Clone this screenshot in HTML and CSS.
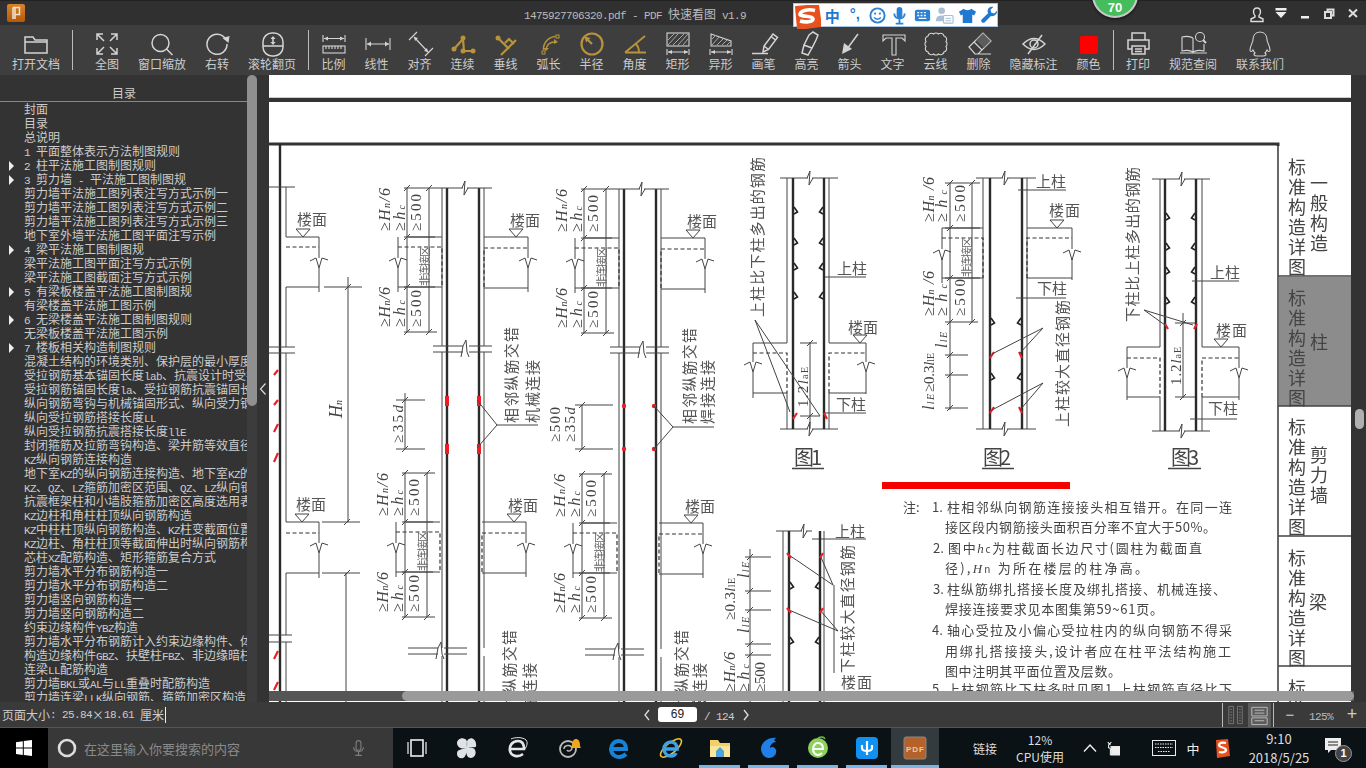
FILE: index.html
```html
<!DOCTYPE html>
<html lang="zh-CN">
<head>
<meta charset="utf-8">
<title>PDF 快速看图</title>
<link rel="stylesheet" href="styles.css">
</head>
<body>
<div class="app">
  <header class="titlebar">
    <svg class="logo" viewBox="0 0 18 18"><defs><linearGradient id="lg" x1="0" y1="0" x2="0" y2="1"><stop offset="0" stop-color="#d8832a"/><stop offset="1" stop-color="#b35a0c"/></linearGradient></defs><rect width="18" height="18" rx="2" fill="url(#lg)"/><path d="M6 3.5h6.500v7H8M6 3.500V15M8 3.500V15" class="logo-p"/></svg>
    <div class="title"><span class="lat">1475927706320.pdf - PDF </span>快速看图<span class="lat"> v1.9</span></div>
    <div class="winctl">
      <span class="wc"><svg viewBox="0 0 24 24" class="ic-w"><path d="M12 7c-2.500 0-3.500 1.700-3.500 4 0 1.500.6 2.800 1.500 3.500v1.500L6 18v2.500h12V18l-4-2v-1.500c.9-.7 1.500-2 1.500-3.500 0-2.300-1-4-3.500-4z"/></svg></span>
      <span class="wc"><svg viewBox="0 0 24 24" class="ic-f"><path d="M6.500 7h11v2.500h-11zM6.500 11h11L12 17z"/></svg></span>
      <span class="wc"><svg viewBox="0 0 24 24" class="ic-f"><path d="M8 15h8v2.500H8z"/></svg></span>
      <span class="wc"><svg viewBox="0 0 24 24" class="ic-w"><path d="M8 11h6v6H8zM10.500 11V8.500h6V14.500h-2.500" stroke-width="2"/></svg></span>
      <span class="wc"><svg viewBox="0 0 24 24" class="ic-w"><path d="M8 8.500l8 7.500M16 8.500l-8 7.500" stroke-width="2"/></svg></span>
    </div>
  </header>

  <div class="badge"><span class="badge-num">70</span></div>

  <div class="ime">
    <svg class="ime-s" viewBox="0 0 28 24"><path d="M3 2 L25 0 L28 21 L5 24 Z" fill="#e8501e" stroke="#e8501e" stroke-width="2" stroke-linejoin="round"/><path d="M22 5.500C16 4 8 5 7 9c-.5 3 13 1.500 13 5 0 3-8 3.500-13 2" fill="none" stroke="#fff" stroke-width="3.600"/></svg>
    <span class="ime-item ime-zh">中</span>
    <span class="ime-item ime-pun">°,</span>
    <span class="ime-item"><svg viewBox="0 0 20 20" class="ime-ic"><circle cx="10" cy="10" r="7.500" fill="none" stroke="#2a82d6" stroke-width="2"/><circle cx="7.500" cy="8" r="1.200" fill="#2a82d6"/><circle cx="12.500" cy="8" r="1.200" fill="#2a82d6"/><path d="M6.500 12c1.500 2.500 5.500 2.500 7 0" fill="none" stroke="#2a82d6" stroke-width="1.500"/></svg></span>
    <span class="ime-item"><svg viewBox="0 0 20 20" class="ime-ic"><rect x="7" y="1" width="6" height="12" rx="3" fill="#2a82d6"/><path d="M4.500 8c0 7 11 7 11 0M10 14v4M6 18.500h8" fill="none" stroke="#2a82d6" stroke-width="2"/></svg></span>
    <span class="ime-item"><svg viewBox="0 0 20 20" class="ime-ic"><rect x="2" y="4" width="16" height="12" rx="2" fill="#2a82d6"/><path d="M4.500 7h2M8 7h2M11.500 7h2M4.500 10h2M8 10h2M11.500 10h2M6 13h8" stroke="#fff" stroke-width="1.500"/></svg></span>
    <span class="ime-item"><svg viewBox="0 0 20 20" class="ime-ic"><circle cx="7" cy="5" r="3.500" fill="#a9bfd6"/><path d="M1 16c0-5 3-6 6-6s3 1 3 1v5z" fill="#a9bfd6"/><rect x="9" y="10" width="10" height="8" rx="1" fill="#fff" stroke="#a9bfd6" stroke-width="1.200"/><path d="M11 13h6M11 15.500h6" stroke="#a9bfd6"/></svg></span>
    <span class="ime-item"><svg viewBox="0 0 20 20" class="ime-ic"><path d="M6 3L1 6l2 4 2-1v9h10V9l2 1 2-4-5-3c-1 2-7 2-8 0z" fill="#1f78d1"/></svg></span>
    <span class="ime-item"><svg viewBox="0 0 20 20" class="ime-ic"><path d="M18 5l-3 3-3-1-1-3 3-3c-3-1-6 1-6 4 0 1 0 1.500.5 2.500L2 14c-1 1-1 2 0 3s2 1 3 0l6.500-6.500c3 1 7-2 6.500-5.500z" fill="#1f78d1"/></svg></span>
  </div>

  <nav class="toolbar">
    <div class="tool wide"><svg viewBox="0 0 36 30" class="ti"><path d="M7 24V8h8l2 3h12v13zM7 13h22"/></svg><span>打开文档</span></div>
    <i class="sep"></i>
    <div class="tool gap-l"><svg viewBox="0 0 36 30" class="ti"><path d="M8 11V5h6M8 5l7 7M28 11V5h-6M28 5l-7 7M8 19v6h6M8 25l7-7M28 19v6h-6M28 25l-7-7"/></svg><span>全图</span></div>
    <div class="tool wide"><svg viewBox="0 0 36 30" class="ti"><circle cx="16.500" cy="14" r="8.500"/><path d="M22.500 20l6 6"/></svg><span>窗口缩放</span></div>
    <div class="tool"><svg viewBox="0 0 36 30" class="ti"><path d="M26.500 10A10 10 0 1 0 28 15"/><path d="M23.500 9l7-2-1 7z" class="fill"/></svg><span>右转</span></div>
    <div class="tool wide"><svg viewBox="0 0 36 30" class="ti"><rect x="9" y="4" width="20" height="23" rx="9"/><path d="M9 17h20"/><path d="M19 8v7" /><path d="M16.500 10l2.500-3 2.500 3zM16.500 13l2.500 3 2.500-3z" class="fill"/></svg><span>滚轮翻页</span></div>
    <i class="sep"></i>
    <div class="tool"><svg viewBox="0 0 36 30" class="ti thin"><path d="M7 6v7M29 6v7M8 9.500h20"/><path d="M8 9.500l4-2v4zM28 9.500l-4-2v4z" class="fill"/><rect x="7" y="17" width="22" height="7"/><path d="M10 17v3M13 17v3M16 17v3M19 17v3M22 17v3M25 17v3"/></svg><span>比例</span></div>
    <div class="tool"><svg viewBox="0 0 36 30" class="ti thin"><path d="M7 9v12M31 9v12M8 15h22"/><path d="M8 15l4-2.500v5zM30 15l-4-2.500v5z" class="fill"/></svg><span>线性</span></div>
    <div class="tool"><svg viewBox="0 0 36 30" class="ti thin"><path d="M7 11l8-8M23 27l8-8M12 8l14 15"/><path d="M12 8l1 4 3-3zM26 23l-1-4-3 3z" class="fill"/></svg><span>对齐</span></div>
    <div class="tool"><svg viewBox="0 0 36 30" class="ti gold"><path d="M9 20l9-10M18 10l1 12h9"/><circle cx="9" cy="20" r="2.500" class="fillg"/><circle cx="18" cy="9" r="2.500" class="fillg"/><circle cx="18" cy="22" r="2.500" class="fillg"/><circle cx="28" cy="22" r="2.500" class="fillg"/></svg><span>连续</span></div>
    <div class="tool"><svg viewBox="0 0 36 30" class="ti gold"><circle cx="10" cy="9" r="2.500" class="fillg"/><path d="M28 11L13 26M10 9l11 11M17 14l4-4 5 5"/></svg><span>垂线</span></div>
    <div class="tool"><svg viewBox="0 0 36 30" class="ti gold"><rect x="11" y="22" width="3" height="3" class="tn"/><rect x="25" y="6" width="3" height="3" class="tn"/><path d="M12.500 21C12 13 18 8 24.500 7.500M15 21c.5-5 4-8 9-8" class="tl"/><path d="M23 10l4 3-4 2zM12 19l3 3 3-3z" class="fillg"/></svg><span>弧长</span></div>
    <div class="tool"><svg viewBox="0 0 36 30" class="ti gold"><circle cx="18" cy="15" r="10.500"/><path d="M18 15l-6-6"/><path d="M10.500 7.500l6 1.500-4.500 4.500z" class="fillg"/></svg><span>半径</span></div>
    <div class="tool"><svg viewBox="0 0 36 30" class="ti gold"><path d="M8 23.500h21M8 23.500L28 7M19 15c2 2 3 5 3 8" class="tm"/></svg><span>角度</span></div>
    <div class="tool"><svg viewBox="0 0 36 30" class="ti thin"><rect x="7" y="4" width="22" height="13"/><path d="M8 11l6-6M8 16l10-11M13 16l11-11M18 16l10-11M23 16l5-6" class="hatch"/><path d="M7 20v6M29 20v6M8 23h20"/><path d="M8 23l4-2v4zM28 23l-4-2v4z" class="fill"/></svg><span>矩形</span></div>
    <div class="tool"><svg viewBox="0 0 36 30" class="ti thin"><path d="M8 5l20 7v5H8z"/><path d="M9 10l4-4M9 16l7-8M14 16l6-6M19 16l5-5M24 16l3-3" class="hatch"/><path d="M7 20v6M29 20v6M8 23h20"/><path d="M8 23l4-2v4zM28 23l-4-2v4z" class="fill"/></svg><span>异形</span></div>
    <div class="tool"><svg viewBox="0 0 36 30" class="ti"><path d="M17 23l1-6 9-12 4.500 3.500-9 12zM18 17l4.500 3.500M25 7.500L29.500 11M6 24.500h16"/></svg><span>画笔</span></div>
    <div class="tool"><svg viewBox="0 0 36 30" class="ti"><path d="M20 6l4-3 5 3-2 5-4 8-8-3zM15 16l-2 8 6 2 4-7"/></svg><span>高亮</span></div>
    <div class="tool"><svg viewBox="0 0 36 30" class="ti"><path d="M26 5L15 20"/><path d="M10 25l2-11 8 6z" class="fill"/></svg><span>箭头</span></div>
    <div class="tool"><svg viewBox="0 0 36 30" class="ti thin"><path d="M8 6h22v6l-3-3h-6v17h-4V9h-6l-3 3z"/></svg><span>文字</span></div>
    <div class="tool"><svg viewBox="0 0 36 30" class="ti thin"><path d="M10 7A3.500 3.500 0 0 1 15.500 5 3.500 3.500 0 0 1 20.500 5 3.500 3.500 0 0 1 26 7 3.500 3.500 0 0 1 28 12.500 3.500 3.500 0 0 1 28 17.500 3.500 3.500 0 0 1 26 23 3.500 3.500 0 0 1 20.500 25 3.500 3.500 0 0 1 15.500 25 3.500 3.500 0 0 1 10 23 3.500 3.500 0 0 1 8 17.500 3.500 3.500 0 0 1 8 12.500 3.500 3.500 0 0 1 10 7Z"/></svg><span>云线</span></div>
    <div class="tool"><svg viewBox="0 0 36 30" class="ti thinner"><path d="M8 18L22 4l8 8-13 13h-3zM13 13l8 8M15 25h15"/><path d="M15 11l7-7 8 8-7 7z" class="fill-d"/></svg><span>删除</span></div>
    <div class="tool wide"><svg viewBox="0 0 36 30" class="ti"><path d="M7 15Q18 4 29 15 18 26 7 15z"/><circle cx="18" cy="15" r="4"/><path d="M12 25L26 6"/></svg><span>隐藏标注</span></div>
    <div class="tool"><svg viewBox="0 0 36 30" class="ti"><rect x="9" y="7" width="18" height="18" rx="2" class="red"/></svg><span>颜色</span></div>
    <i class="sep"></i>
    <div class="tool"><svg viewBox="0 0 36 30" class="ti"><path d="M12 11V4h13v7M12 20H8v-9h21v9h-4M12 17h13v8H12zM15 20h7M15 22.500h7"/></svg><span>打印</span></div>
    <div class="tool wide"><svg viewBox="0 0 36 30" class="ti thin"><path d="M18 9c-3-2-7-2-11-1v14c4-1 8-1 11 1 3-2 7-2 11-1v-7M18 9v14M5 24h27"/><circle cx="25" cy="8" r="4.500"/><path d="M28 11l3 3" stroke-width="2"/></svg><span>规范查阅</span></div>
    <div class="tool wide"><svg viewBox="0 0 36 30" class="ti thin"><path d="M18 3c-5 0-7 4-7 8 0 2-3 6-3 10 0 2 2 2 3 0 1 2 2 3 2 3-2 1-1 3 2 3h6c3 0 4-2 2-3 0 0 1-1 2-3 1 2 3 2 3 0 0-4-3-8-3-10 0-4-2-8-7-8z"/></svg><span>联系我们</span></div>
  </nav>

  <main class="main">
    <aside class="toc">
      <div class="toc-body">
        <div class="toc-head">目录</div>
        <div class="toc-list">
          <div class="row">封面</div>
          <div class="row">目录</div>
          <div class="row">总说明</div>
          <div class="row"><span class="lat">1 </span>平面整体表示方法制图规则</div>
          <div class="row arrow"><span class="lat">2 </span>柱平法施工图制图规则</div>
          <div class="row arrow"><span class="lat">3 </span>剪力墙<span class="lat"> - </span>平法施工图制图规</div>
          <div class="row">剪力墙平法施工图列表注写方式示例一</div>
          <div class="row">剪力墙平法施工图列表注写方式示例二</div>
          <div class="row">剪力墙平法施工图列表注写方式示例三</div>
          <div class="row">地下室外墙平法施工图平面注写示例</div>
          <div class="row arrow"><span class="lat">4 </span>梁平法施工图制图规</div>
          <div class="row">梁平法施工图平面注写方式示例</div>
          <div class="row">梁平法施工图截面注写方式示例</div>
          <div class="row arrow"><span class="lat">5 </span>有梁板楼盖平法施工图制图规</div>
          <div class="row">有梁楼盖平法施工图示例</div>
          <div class="row arrow"><span class="lat">6 </span>无梁楼盖平法施工图制图规则</div>
          <div class="row">无梁板楼盖平法施工图示例</div>
          <div class="row arrow"><span class="lat">7 </span>楼板相关构造制图规则</div>
          <div class="row">混凝土结构的环境类别、保护层的最小厚度</div>
          <div class="row">受拉钢筋基本锚固长度<span class="lat">lab</span>、抗震设计时受拉钢筋</div>
          <div class="row">受拉钢筋锚固长度<span class="lat">la</span>、受拉钢筋抗震锚固长度</div>
          <div class="row">纵向钢筋弯钩与机械锚固形式、纵向受力钢筋</div>
          <div class="row">纵向受拉钢筋搭接长度<span class="lat">LL</span></div>
          <div class="row">纵向受拉钢筋抗震搭接长度<span class="lat">llE</span></div>
          <div class="row">封闭箍筋及拉筋弯钩构造、梁并筋等效直径</div>
          <div class="row"><span class="lat">KZ</span>纵向钢筋连接构造</div>
          <div class="row">地下室<span class="lat">KZ</span>的纵向钢筋连接构造、地下室<span class="lat">KZ</span>的</div>
          <div class="row"><span class="lat">KZ</span>、<span class="lat">QZ</span>、<span class="lat">LZ</span>箍筋加密区范围、<span class="lat">QZ</span>、<span class="lat">LZ</span>纵向钢筋</div>
          <div class="row">抗震框架柱和小墙肢箍筋加密区高度选用表</div>
          <div class="row"><span class="lat">KZ</span>边柱和角柱柱顶纵向钢筋构造</div>
          <div class="row"><span class="lat">KZ</span>中柱柱顶纵向钢筋构造、<span class="lat">KZ</span>柱变截面位置</div>
          <div class="row"><span class="lat">KZ</span>边柱、角柱柱顶等截面伸出时纵向钢筋构造</div>
          <div class="row">芯柱<span class="lat">XZ</span>配筋构造、矩形箍筋复合方式</div>
          <div class="row">剪力墙水平分布钢筋构造一</div>
          <div class="row">剪力墙水平分布钢筋构造二</div>
          <div class="row">剪力墙竖向钢筋构造一</div>
          <div class="row">剪力墙竖向钢筋构造二</div>
          <div class="row">约束边缘构件<span class="lat">YBZ</span>构造</div>
          <div class="row">剪力墙水平分布钢筋计入约束边缘构件、体</div>
          <div class="row">构造边缘构件<span class="lat">GBZ</span>、扶壁柱<span class="lat">FBZ</span>、非边缘暗柱</div>
          <div class="row">连梁<span class="lat">LL</span>配筋构造</div>
          <div class="row">剪力墙<span class="lat">BKL</span>或<span class="lat">AL</span>与<span class="lat">LL</span>重叠时配筋构造</div>
          <div class="row">剪力墙连梁<span class="lat">LLK</span>纵向钢筋、箍筋加密区构造</div>
        </div>
      </div>
      <div class="toc-scroll"><div class="toc-thumb"></div></div>
    </aside>
    <div class="splitter"><svg viewBox="0 0 8 12" class="chev"><path d="M6.500 .5L1.500 6l5 5.500"/></svg></div>

    <section class="viewer">
      <svg class="page" viewBox="269 75 1082 627" preserveAspectRatio="none">
        <defs>
          <path id="zz" d="M-9 3L-3 0 0 10 3 0 9 2" class="th"/>
          <path id="zh" d="M-3 0L0-7-1 7 3 0" class="th"/>
          <path id="tick" d="M-3 3L3-3" class="th"/>
          <path id="kl" d="M0-5L3.500 0 0 2" class="kink"/>
          <path id="kr" d="M0-5L-3.500 0 0 2" class="kink"/>
          <g id="tri"><path d="M-7-8H7L0 0Z" class="th nofill"/></g>
          <g id="jt">
            <path d="M408 237H442M484 237H528M398 287H442M484 288H528M398 237V258M398 268V292M528 237V258M528 268V292" class="th"/>
            <path d="M398 247H442V287M484 287V248H528" class="dash"/>
            <use href="#zz" x="398" y="258"/><use href="#zz" x="528" y="258"/>
            <use href="#tri" x="516" y="237"/>
            <text x="510" y="226" class="cn" textLength="30">楼面</text>
            <path d="M407 188V332M429 188V332M404 188H437M404 237H435M404 287H435M404 332H437" class="th"/>
            <use href="#tick" x="407" y="188"/><use href="#tick" x="429" y="188"/><use href="#tick" x="407" y="237"/><use href="#tick" x="407" y="287"/><use href="#tick" x="407" y="332"/><use href="#tick" x="429" y="332"/>
            <text class="it" transform="translate(390,231) rotate(-90)" textLength="43">≥H<tspan class="sub">n</tspan>/6</text>
            <text class="it" transform="translate(405,231) rotate(-90)" textLength="26">≥h<tspan class="sub">c</tspan></text>
            <text class="sr" transform="translate(421,231) rotate(-90)" textLength="37">≥500</text>
            <text class="it" transform="translate(390,327) rotate(-90)" textLength="40">≥H<tspan class="sub">n</tspan>/6</text>
            <text class="it" transform="translate(405,327) rotate(-90)" textLength="27">≥h<tspan class="sub">c</tspan></text>
            <text class="sr" transform="translate(421,327) rotate(-90)" textLength="37">≥500</text>
            <text class="cn-s" transform="translate(429,286) rotate(-90)" textLength="40">非连接区</text>
          </g>
          <g id="leaf1">
            <path d="M433 346H463M469 346H492M433 352H463M469 352H492M461 357L463 346 466 340 467 352 469 357" class="th"/>
          </g>
        </defs>

        <rect x="269" y="75" width="1082" height="22" fill="#fff"/>
        <rect x="269" y="97" width="1082" height="1" fill="#ccc"/>
        <rect x="269" y="102" width="1082" height="600" fill="#fff"/>
        <rect x="1279" y="277" width="72" height="129" fill="#8c8c8c"/>

        <path d="M269 144H1278L1278 146" class="top"/>
        <path d="M1278 146V702M1278 276H1351M1278 406H1351M1278 536H1351M1278 666H1351" class="frame"/>

        <text x="1297" y="158" class="vt">标准构造详图</text>
        <text x="1297" y="289" class="vt">标准构造详图</text>
        <text x="1297" y="418" class="vt">标准构造详图</text>
        <text x="1297" y="549" class="vt">标准构造详图</text>
        <text x="1297" y="679" class="vt">标准构造详图</text>
        <text x="1319" y="174" class="vt">一般构造</text>
        <text x="1319" y="333" class="vt">柱</text>
        <text x="1319" y="446" class="vt">剪力墙</text>
        <text x="1318" y="593" class="vt">梁</text>

        <!-- left partial column -->
        <path d="M280 144V702" class="tk"/>
        <path d="M286 187V237M286 287V347M286 353V522M286 573V635M286 642V702M269 187H295M269 347H295M269 353H295M269 635H292M269 642H292" class="th"/>
        <path d="M286 237H319M286 287H319M286 522H319M286 573H319M319 237V258M319 268V292M319 522V543M319 553V578" class="th"/>
        <path d="M286 247H319M286 533H319" class="dash"/>
        <use href="#zz" x="319" y="258"/><use href="#zz" x="319" y="543"/>
        <use href="#tri" x="303" y="237"/><use href="#tri" x="302" y="522"/>
        <text x="297" y="225" class="cn" textLength="30">楼面</text>
        <text x="296" y="510" class="cn" textLength="30">楼面</text>
        <path d="M274 375L278 370M274 405L278 400M274 432L278 424M274 462L278 453M274 659L278 651M274 690L278 682" class="redl"/>

        <!-- Hn dimension -->
        <path d="M348 277V522M346 573V702M324 287H362M322 522H360M322 573H360" class="th"/>
        <use href="#tick" x="348" y="287"/><use href="#tick" x="347" y="522"/><use href="#tick" x="347" y="573"/>
        <text class="it big" transform="translate(342,418) rotate(-90)">H<tspan class="sub">n</tspan></text>

        <!-- column groups -->
        <path d="M442 188V346M442 352V648M442 656V702M484 188V346M484 352V648M484 656V702M619 189V347M619 353V649M619 657V702M661 189V347M661 353V649M661 657V702" class="th"/>
        <path d="M447 188V702M479 188V702M624 189V702M656 189V702" class="tk"/>
        <path d="M437 188H463M467 188H492M614 189H640M644 189H669" class="th"/>
        <use href="#zh" x="465" y="188"/><use href="#zh" x="642" y="189"/>
        <use href="#jt"/>
        <use href="#jt" x="177" y="1"/>
        <use href="#jt" x="-2" y="285"/>
        <use href="#jt" x="175" y="286"/>
        <use href="#leaf1"/>
        <use href="#leaf1" x="177" y="1"/>
        <use href="#leaf1" x="-25" y="302"/>
        <use href="#leaf1" x="152" y="303"/>

        <!-- mechanical joint -->
        <rect x="445" y="396" width="4" height="10" class="red"/><rect x="477" y="396" width="4" height="10" class="red"/>
        <rect x="445" y="444" width="4" height="10" class="red"/><rect x="477" y="444" width="4" height="10" class="red"/>
        <path d="M477 400L497 425 477 448M497 425H538M405 393V449M396 400H425M396 449H425" class="th"/>
        <use href="#tick" x="405" y="400"/><use href="#tick" x="405" y="449"/>
        <text class="sr" transform="translate(403,443) rotate(-90)" textLength="38">≥35<tspan class="ital">d</tspan></text>
        <text class="cn" transform="translate(517,423) rotate(-90)" textLength="96">相邻纵筋交错</text>
        <text class="cn" transform="translate(538,423) rotate(-90)" textLength="63">机械连接</text>

        <!-- welded joint -->
        <circle cx="624" cy="406" r="2.200" class="red"/><circle cx="654" cy="406" r="2.200" class="red"/>
        <circle cx="624" cy="449" r="2.200" class="red"/><circle cx="654" cy="449" r="2.200" class="red"/>
        <path d="M654 406L673 427 654 449M673 427H714M582 405V449M575 405H613M575 449H613" class="th"/>
        <use href="#tick" x="582" y="405"/><use href="#tick" x="582" y="449"/>
        <text class="sr" transform="translate(560,442) rotate(-90)" textLength="35">≥500</text>
        <text class="sr" transform="translate(575,442) rotate(-90)" textLength="35">≥35<tspan class="ital">d</tspan></text>
        <text class="cn" transform="translate(695,424) rotate(-90)" textLength="96">相邻纵筋交错</text>
        <text class="cn" transform="translate(713,424) rotate(-90)" textLength="64">焊接连接</text>

        <!-- lower labels, cut by the page fold -->
        <text class="cn" transform="translate(515,726) rotate(-90)" textLength="96">相邻纵筋交错</text>
        <text class="cn" transform="translate(535,727) rotate(-90)" textLength="64">机械连接</text>
        <text class="cn" transform="translate(687,726) rotate(-90)" textLength="96">相邻纵筋交错</text>
        <text class="cn" transform="translate(705,727) rotate(-90)" textLength="64">焊接连接</text>

        <!-- figure 1 -->
        <path d="M787 178V343M787 393V429M829 178V343M829 393V429M780 178H808M812 178H838M780 429H808M812 429H838" class="th"/>
        <path d="M793 178V429M824 178V429" class="tk"/>
        <use href="#zh" x="810" y="178"/><use href="#zh" x="810" y="429"/>
        <path d="M753 343H787M829 343H866M753 393H787M829 393H866M753 343V362M753 372V398M866 343V362M866 372V394" class="th"/>
        <path d="M753 353H787V393M829 393V353H866" class="dash"/>
        <use href="#zz" x="753" y="362"/><use href="#zz" x="866" y="362"/>
        <use href="#kl" x="794" y="212"/><use href="#kl" x="794" y="243"/><use href="#kl" x="794" y="268"/><use href="#kl" x="794" y="297"/>
        <use href="#kr" x="823" y="212"/><use href="#kr" x="823" y="243"/><use href="#kr" x="823" y="268"/><use href="#kr" x="823" y="297"/>
        <path d="M793 419L797 413M824 413L827 419" class="redl"/>
        <path d="M755 320L790 412M755 320L820 416M825 277H866M825 413H866M810 342V429M800 343H817M800 416H820" class="th"/>
        <use href="#tick" x="810" y="343"/><use href="#tick" x="810" y="416"/>
        <use href="#tri" x="860" y="343"/>
        <text class="cn" transform="translate(763,317) rotate(-90)" textLength="160">上柱比下柱多出的钢筋</text>
        <text x="837" y="274" class="cn" textLength="30">上柱</text>
        <text x="848" y="333" class="cn" textLength="30">楼面</text>
        <text x="836" y="410" class="cn" textLength="30">下柱</text>
        <text class="sr" transform="translate(808,407) rotate(-90)" textLength="40">1.2<tspan class="ital">l</tspan><tspan class="sub">aE</tspan></text>
        <text x="794" y="465" class="fig" textLength="28">图1</text>
        <path d="M792 468.500H824" class="fign"/>

        <!-- figure 2 -->
        <path d="M983 178V429M1027 178V429M976 178H1003M1007 178H1036M976 429H1003M1007 429H1036" class="th"/>
        <path d="M990 178V429M1022 178V429" class="tk"/>
        <use href="#zh" x="1005" y="178"/><use href="#zh" x="1005" y="429"/>
        <path d="M942 228H983M1027 228H1072M942 278H983M1027 278H1072M942 228V249M942 259V283M1072 228V249M1072 259V280" class="th"/>
        <path d="M942 238H983V278M1027 278V238H1072" class="dash"/>
        <use href="#zz" x="942" y="250"/><use href="#zz" x="1072" y="250"/>
        <use href="#kl" x="991" y="323"/><use href="#kl" x="991" y="378"/><use href="#kr" x="1021" y="323"/><use href="#kr" x="1021" y="378"/>
        <path d="M990 358L994 352M1019 352L1022 358M990 413L994 407M1019 407L1022 413" class="redl"/>
        <path d="M1043 328L992 354M1043 328L1020 353M1043 383L992 410M1043 383L1020 410M1018 190H1066M1016 298H1066M950 183V410M972 183V322M945 183H980M945 228H980M945 278H980M945 322H978M945 355H968M945 375H968M945 408H968" class="th"/>
        <use href="#tick" x="950" y="183"/><use href="#tick" x="972" y="183"/><use href="#tick" x="950" y="228"/><use href="#tick" x="950" y="278"/><use href="#tick" x="950" y="322"/><use href="#tick" x="972" y="322"/><use href="#tick" x="950" y="355"/><use href="#tick" x="950" y="375"/><use href="#tick" x="950" y="408"/>
        <use href="#tri" x="1057" y="228"/>
        <text class="it" transform="translate(934,222) rotate(-90)" textLength="45">≥H<tspan class="sub">n</tspan> /6</text>
        <text class="it" transform="translate(947,222) rotate(-90)" textLength="32">≥h<tspan class="sub">c</tspan></text>
        <text class="sr" transform="translate(965,222) rotate(-90)" textLength="37">≥500</text>
        <text class="it" transform="translate(934,316) rotate(-90)" textLength="45">≥H<tspan class="sub">n</tspan> /6</text>
        <text class="it" transform="translate(947,316) rotate(-90)" textLength="32">≥h<tspan class="sub">c</tspan></text>
        <text class="sr" transform="translate(965,316) rotate(-90)" textLength="37">≥500</text>
        <text class="cn-s" transform="translate(971,277) rotate(-90)" textLength="40">非连接区</text>
        <text class="sr" transform="translate(934,392) rotate(-90)" textLength="39">≥0.3<tspan class="ital">l</tspan><tspan class="sub">lE</tspan></text>
        <text class="it" transform="translate(947,348) rotate(-90)" textLength="16">l<tspan class="sub">lE</tspan></text>
        <text class="it" transform="translate(934,410) rotate(-90)" textLength="16">l<tspan class="sub">lE</tspan></text>
        <text class="cn" transform="translate(1068,427) rotate(-90)" textLength="127">上柱较大直径钢筋</text>
        <text x="1036" y="187" class="cn" textLength="30">上柱</text>
        <text x="1049" y="216" class="cn" textLength="31">楼面</text>
        <text x="1037" y="294" class="cn" textLength="30">下柱</text>
        <text x="983" y="465" class="fig" textLength="28">图2</text>
        <path d="M982 468.500H1014" class="fign"/>

        <!-- figure 3 -->
        <path d="M1160 179V347M1160 397V431M1202 179V347M1202 397V431M1152 179H1180M1184 179H1210M1152 431H1180M1184 431H1210" class="th"/>
        <path d="M1165 179V431M1196 179V431" class="tk"/>
        <use href="#zh" x="1182" y="179"/><use href="#zh" x="1182" y="431"/>
        <path d="M1127 347H1160M1202 347H1239M1127 397H1160M1202 397H1239M1127 347V368M1127 378V400M1239 347V368M1239 378V400" class="th"/>
        <path d="M1127 358H1160V397M1202 397V358H1239" class="dash"/>
        <use href="#zz" x="1127" y="368"/><use href="#zz" x="1239" y="368"/>
        <use href="#kl" x="1166" y="218"/><use href="#kl" x="1166" y="248"/><use href="#kl" x="1166" y="272"/><use href="#kl" x="1166" y="302"/>
        <use href="#kr" x="1195" y="218"/><use href="#kr" x="1195" y="248"/><use href="#kr" x="1195" y="272"/><use href="#kr" x="1195" y="302"/>
        <path d="M1165 324L1168 329M1194 329L1197 324" class="redl"/>
        <path d="M1144 310L1165 325M1144 310L1193 325M1192 281H1239M1190 419H1237M1183 313V398M1175 323H1195M1175 397H1195" class="th"/>
        <use href="#tick" x="1183" y="323"/><use href="#tick" x="1183" y="397"/>
        <use href="#tri" x="1221" y="347"/>
        <text class="cn" transform="translate(1138,322) rotate(-90)" textLength="155">下柱比上柱多出的钢筋</text>
        <text class="sr" transform="translate(1181,385) rotate(-90)" textLength="38">1.2<tspan class="ital">l</tspan><tspan class="sub">aE</tspan></text>
        <text x="1210" y="278" class="cn" textLength="30">上柱</text>
        <text x="1216" y="336" class="cn" textLength="31">楼面</text>
        <text x="1208" y="414" class="cn" textLength="30">下柱</text>
        <text x="1171" y="465" class="fig" textLength="28">图3</text>
        <path d="M1168 468.500H1201" class="fign"/>

        <rect x="882" y="482" width="188" height="7" fill="#f60000"/>

        <!-- lower figure -->
        <path d="M783 531V702M824 531V702M776 531H802M806 531H812M812 539H866" class="th"/>
        <use href="#zh" x="804" y="531"/>
        <path d="M789 531V702M820 531V702" class="tk"/>
        <text x="835" y="537" class="cn" textLength="30">上柱</text>
        <path d="M789 555L833 585M820 555L833 585M789 610L838 631M820 610L838 631M750 549V702M745 557H771M745 591H771M745 610H771M745 644H771M745 655H771M834 585V673" class="th"/>
        <use href="#tick" x="750" y="557"/><use href="#tick" x="750" y="591"/><use href="#tick" x="750" y="610"/><use href="#tick" x="750" y="644"/><use href="#tick" x="750" y="655"/>
        <use href="#kl" x="790" y="587"/><use href="#kl" x="790" y="642"/><use href="#kr" x="819" y="587"/><use href="#kr" x="819" y="642"/>
        <path d="M787 553L791 558M820 558L823 553M787 608L791 613M820 613L823 608" class="redl"/>
        <text class="it" transform="translate(749,578) rotate(-90)" textLength="16">l<tspan class="sub">lE</tspan></text>
        <text class="sr" transform="translate(735,620) rotate(-90)" textLength="42">≥0.3<tspan class="ital">l</tspan><tspan class="sub">lE</tspan></text>
        <text class="it" transform="translate(749,633) rotate(-90)" textLength="16">l<tspan class="sub">lE</tspan></text>
        <text class="it" transform="translate(735,692) rotate(-90)" textLength="40">≥H<tspan class="sub">n</tspan>/6</text>
        <text class="it" transform="translate(749,692) rotate(-90)" textLength="28">≥h<tspan class="sub">c</tspan></text>
        <text class="sr" transform="translate(765,692) rotate(-90)" textLength="30">≥500</text>
        <text class="cn" transform="translate(853,673) rotate(-90)" textLength="128">下柱较大直径钢筋</text>
        <text x="841" y="688" class="cn" textLength="31">楼面</text>

        <!-- notes -->
        <g class="notes">
          <text x="903" y="512">注:</text>
          <text x="932" y="512">1.</text>
          <text x="947" y="512" textLength="285">柱相邻纵向钢筋连接接头相互错开。在同一连</text>
          <text x="945" y="532" textLength="271">接区段内钢筋接头面积百分率不宜大于50%。</text>
          <text x="933" y="553">2.</text>
          <text x="948" y="553" textLength="254">图中<tspan class="ital">h</tspan><tspan class="sub">c</tspan>为柱截面长边尺寸(圆柱为截面直</text>
          <text x="945" y="573" textLength="203">径),<tspan class="ital">H</tspan><tspan class="sub">n</tspan> 为所在楼层的柱净高。</text>
          <text x="933" y="594">3.</text>
          <text x="947" y="594" textLength="279">柱纵筋绑扎搭接长度及绑扎搭接、机械连接、</text>
          <text x="945" y="614" textLength="218">焊接连接要求见本图集第59~61页。</text>
          <text x="932" y="635">4.</text>
          <text x="947" y="635" textLength="285">轴心受拉及小偏心受拉柱内的纵向钢筋不得采</text>
          <text x="945" y="656" textLength="286">用绑扎搭接接头,设计者应在柱平法结构施工</text>
          <text x="945" y="676" textLength="176">图中注明其平面位置及层数。</text>
          <text x="932" y="694">5.</text>
          <text x="947" y="694" textLength="285">上柱钢筋比下柱多时见图1,上柱钢筋直径比下</text>
        </g>
      </svg>
      <div class="hbar"><div class="hthumb"></div></div>
      <div class="vthumb"></div>
    </section>
  </main>

  <footer class="status">
    <div class="st-left">页面大小<span class="lat">: 25.84</span>×<span class="lat">18.61 </span>厘米<i class="caret"></i></div>
    <div class="pager">
      <svg viewBox="0 0 8 12" class="pg-arrow"><path d="M6 1L2 6l4 5"/></svg>
      <span class="pg-box">69</span>
      <span class="pg-total"><span class="lat">/ 124</span></span>
      <svg viewBox="0 0 8 12" class="pg-arrow"><path d="M2 1l4 5-4 5"/></svg>
    </div>
    <div class="st-right">
      <div class="views">
        <span class="view"><svg viewBox="0 0 24 24" class="vw"><path d="M4 3h5v18H4zM13 3h5v18h-5zM5.500 6h2M5.500 9h2M5.500 12h2M5.500 15h2M5.500 18h2M14.500 6h2M14.500 9h2M14.500 12h2M14.500 15h2M14.500 18h2"/></svg></span>
        <span class="view on"><svg viewBox="0 0 24 24" class="vw on"><path d="M4 4h16v9H4zM4 15h16v7H4zM7 7h10M7 10h10M7 18h10"/></svg></span>
      </div>
      <span class="zoom-btn">−</span>
      <span class="zoom-val"><span class="lat">125%</span></span>
      <span class="zoom-btn plus">+</span>
    </div>
  </footer>

  <div class="taskbar">
    <div class="start"><svg viewBox="0 0 16 16" class="win"><path d="M0 2.200L6.800 1.200V7.600H0zM7.800 1L16 0V7.600H7.800zM0 8.600H6.800V15L0 14zM7.800 8.600H16V16L7.800 15z"/></svg></div>
    <div class="search">
      <svg viewBox="0 0 20 20" class="cortana"><circle cx="10" cy="10" r="8" /></svg>
      <span class="search-text">在这里输入你要搜索的内容</span>
      <svg viewBox="0 0 16 20" class="mic"><rect x="5" y="1" width="6" height="12" rx="3"/><path d="M2 9c0 7 12 7 12 0M8 15v4M4 19h8"/></svg>
    </div>
    <div class="apps">
      <span class="app-i first"><svg viewBox="0 0 24 24" class="ai"><rect x="6" y="4" width="12" height="16" fill="none" stroke="#eee" stroke-width="1.600"/><path d="M3 6v12M21 6v12" stroke="#eee" stroke-width="1.200"/></svg></span>
      <span class="app-i"><svg viewBox="0 0 24 24" class="ai"><path d="M12 12C5 14 2 10 2 7s4-6 8-4c3 1 2 6 2 9zM12 12c-2 7 1 10 4 10s6-4 4-8c-1-3-6-2-8-2zM12 12c7-2 10 1 9-4 0-4-4-7-7-5-3 1-2 6-2 9zM12 12c-7 2-10 1-10 6 0 3 3 5 6 4 3-1 4-7 4-10z" fill="#dfe3e5"/></svg></span>
      <span class="app-i"><svg viewBox="0 0 24 24" class="ai"><path d="M4 13h14c0-6-2-8-6-8-6 0-9 5-8 10 1 5 8 7 13 3" fill="none" stroke="#e6e6e6" stroke-width="2.600"/><path d="M5 3c4-2 12-2 15 1s-1 9-1 9" fill="none" stroke="#e6e6e6" stroke-width="1"/></svg></span>
      <span class="app-i"><svg viewBox="0 0 24 24" class="ai"><circle cx="11" cy="13" r="8" fill="none" stroke="#bbb" stroke-width="1.800"/><path d="M7 13c0-4 7-5 8-1 0 3-4 4-5 2" fill="none" stroke="#bbb" stroke-width="1.500"/><path d="M15 9c0-4 2-6 4-6s4 2 4 6c0 2 1 3 1 3H14s1-1 1-3z" fill="#f0a818"/></svg></span>
      <span class="app-i"><svg viewBox="0 0 24 24" class="ai"><path d="M4 13h14c0-5-3-8-7-8-5 0-8 4-8 8 0 5 4 8 8 8 3 0 5-1 7-3" fill="none" stroke="#1783d8" stroke-width="4"/></svg></span>
      <span class="app-i"><svg viewBox="0 0 24 24" class="ai"><ellipse cx="12" cy="12" rx="13" ry="5" fill="none" stroke="#f0c030" stroke-width="1.600" transform="rotate(-40 12 12)"/><path d="M6 13h12c0-4-2-7-6-7-4 0-7 3-7 7s3 7 7 7c2 0 4-1 5-3" fill="none" stroke="#3ea2e8" stroke-width="3.500"/></svg></span>
      <i class="apps-gap"></i>
      <span class="app-i run"><svg viewBox="0 0 24 24" class="ai"><path d="M2 4h8l2 3h10v14H2z" fill="#f3cf6a"/><path d="M2 10h20v11H2z" fill="#fbe59b"/><path d="M8 15l4-4 4 4v6H8z" fill="#4aa5dc"/></svg></span>
      <span class="app-i run"><svg viewBox="0 0 24 24" class="ai"><path d="M19 2C12 1 4 6 4 13c0 5 4 9 8 9 5 0 8-4 7-8-1-3-4-4-6-2 0-3 3-6 6-6l-2-2z" fill="#2080e8"/></svg></span>
      <span class="app-i run"><svg viewBox="0 0 24 24" class="ai"><circle cx="12" cy="12" r="10" fill="#8dd05c"/><path d="M7 13h10c0-4-2-6-5-6s-5 3-5 6 2 6 5 6c2 0 3-1 4-2" fill="none" stroke="#fff" stroke-width="2"/><path d="M12 2c4-2 6-1 7 1" fill="none" stroke="#6bb83c" stroke-width="1.500"/></svg></span>
      <span class="app-i run"><svg viewBox="0 0 24 24" class="ai"><rect x="1" y="1" width="22" height="22" rx="4" fill="#1090f0"/><path d="M12 5v14M7 9v3c0 2 2 3 5 3s5-1 5-3V9" fill="none" stroke="#fff" stroke-width="2.200"/></svg></span>
      <span class="app-i active run"><svg viewBox="0 0 24 24" class="ai"><rect x="1" y="1" width="22" height="22" rx="2" fill="#b4622a" stroke="#888"/><text x="12" y="16" class="pdf-t" textLength="18">PDF</text></svg></span>
    </div>
    <div class="tray">
      <span class="t-link">链接</span>
      <span class="t-cpu"><span>12%</span><span>CPU使用</span></span>
      <span class="t-ic"><svg viewBox="0 0 14 10" class="t-up"><path d="M1 8.500L7 2l6 6.500"/></svg></span>
      <span class="t-ic"><svg viewBox="0 0 20 16" class="t-bat"><path d="M3 1l3 3M7 1L4 4v3l2 1v2M6 10h10v5H6zM6 6h10v4" /><rect x="7" y="6" width="9" height="9" fill="#eee"/></svg></span>
      <span class="t-kb"><svg viewBox="0 0 24 16" class="t-key"><rect x=".5" y=".5" width="23" height="15"/><path d="M3 4h18M3 7.500h18M6 11.500h12" stroke-dasharray="1.500 1"/></svg></span>
      <span class="t-zh">中</span>
      <span class="t-s"><svg viewBox="0 0 16 20" class="t-so"><path d="M2 2l12-1 2 17-13 2z" fill="#e8501e"/><path d="M12 5C8 4 5 5 5 7c0 3 7 2 7 5 0 2-4 3-7 2" fill="none" stroke="#fff" stroke-width="2.200"/></svg></span>
      <span class="clock"><span>9:10</span><span>2018/5/25</span></span>
      <span class="notif"><svg viewBox="0 0 18 18" class="n-ic"><path d="M1 1h16v12H7l-3 3v-3H1z" fill="#eee"/><path d="M4 5h10M4 8h10" stroke="#222"/></svg><b class="n-badge">1</b></span>
    </div>
  </div>
</div>
</body>
</html>
```
FILE: styles.css
```css
* { box-sizing: border-box; }
html, body { margin: 0; height: 100%; background: #333; overflow: hidden; }
body { font: 12px "Noto Sans CJK SC", "Liberation Sans", sans-serif; color: #ccc; }
.lat { font: 11px "Liberation Mono", monospace; letter-spacing: -.6px; }
.app { position: relative; display: flex; flex-direction: column; height: 768px; width: 1366px; }

.titlebar { height: 25px; background: #303030; display: flex; align-items: center; position: relative; border-top: 1px solid #222; flex: none; }
.logo { width: 18px; height: 18px; margin-left: 7px; }
.logo-p { fill: none; stroke: #f4e6d4; stroke-width: 1.500; }
.title { position: absolute; left: 524px; top: 3px; line-height: 20px; white-space: pre; color: #bbb; }
.winctl { margin-left: auto; display: flex; padding-right: 1px; }
.wc { width: 24px; height: 24px; display: block; }
.wc svg { width: 24px; height: 24px; display: block; }
.ic-w { fill: none; stroke: #ddd; stroke-width: 1.400; }
.ic-f { fill: #eee; }

.badge { position: absolute; left: 1092px; top: -28px; width: 46px; height: 46px; border-radius: 50%; background: #46bd5c; border: 2px solid #c8c8c8; box-shadow: 0 1px 3px #111; text-align: center; z-index: 4; }
.badge-num { position: absolute; left: 0; right: 0; top: 27px; font: bold 13px/14px "Liberation Sans", sans-serif; color: #fff; }

.ime { position: absolute; left: 793px; top: 3px; width: 205px; height: 24px; background: #fff; border: 1px solid #a9c7e3; display: flex; align-items: center; z-index: 3; }
.ime-s { width: 28px; height: 24px; margin-left: -1px; margin-top: 3px; flex: none; }
.ime-item { width: 22.500px; display: flex; justify-content: center; align-items: center; flex: none; }
.ime-zh { font: bold 15px "Noto Sans CJK SC", sans-serif; color: #1f78d1; margin-left: 0; }
.ime-pun { font: bold 15px "Liberation Sans", sans-serif; color: #1f78d1; margin-top: -4px; }
.ime-ic { width: 19px; height: 19px; }

.toolbar { height: 50px; background: #3e3e3e; display: flex; align-items: flex-start; padding-left: 2.500px; flex: none; }
.tool { width: 43px; flex: none; display: flex; flex-direction: column; align-items: center; height: 50px; padding-top: 4px; }
.tool.wide { width: 67px; }
.tool.gap-l { margin-left: 9.500px; }
.tool span { line-height: 16px; color: #ccc; margin-top: -3px; white-space: nowrap; }
.sep { width: 1px; height: 40px; margin: 5px 3px 0 2.500px; background: #bbb; flex: none; }
.ti { width: 36px; height: 30px; display: block; fill: none; stroke: #d4d4d4; stroke-width: 1.500; flex: none; }
.ti.thin { stroke-width: 1.100; }
.ti.thinner { stroke-width: 1.200; }
.ti.gold { stroke: #b8933a; stroke-width: 2.200; }
.ti .fill { fill: #d4d4d4; stroke: none; }
.ti .fillg { fill: #b8933a; stroke: none; }
.ti .fill-d { fill: #6a6a6a; stroke: none; opacity: .7; }
.ti .tn { stroke-width: 1; }
.ti .tl { stroke-width: 1.500; }
.ti .tm { stroke-width: 1.800; }
.ti .hatch { stroke: #a8a8a8; stroke-width: 1; }
.ti .red { fill: #f00; stroke: none; }

.main { height: 627px; display: flex; background: #333; flex: none; }
.toc { width: 257px; display: flex; flex: none; }
.toc-body { width: 247px; overflow: hidden; background: #333; }
.toc-head { height: 27px; border-bottom: 1px solid #888; text-align: center; line-height: 36px; color: #ccc; padding-left: 1px; }
.toc-list { height: 599px; overflow: hidden; }
.row { height: 14px; line-height: 14px; padding-left: 24px; white-space: pre; color: #ccc; display: block; }
.row.arrow { padding-left: 9px; }
.row.arrow::before { content: ""; display: inline-block; width: 0; height: 0; border-left: 5px solid #eee; border-top: 5px solid transparent; border-bottom: 5px solid transparent; margin-right: 10px; vertical-align: -1px; }
.toc-scroll { width: 10px; background: #3c3c3c; }
.toc-thumb { height: 331px; background: #909090; border-radius: 5px; }
.splitter { width: 12px; display: flex; align-items: center; justify-content: center; flex: none; }
.chev { width: 8px; height: 12px; fill: none; stroke: #ddd; stroke-width: 1.200; }

.viewer { position: relative; width: 1097px; flex: none; overflow: hidden; background: #333; }
.page { display: block; width: 1082px; height: 627px; font-family: "Noto Sans CJK SC", sans-serif; filter: blur(.35px); }
.th { fill: none; stroke: #444; stroke-width: 1; }
.th.nofill { fill: #fff; }
.tk { fill: none; stroke: #2a2a2a; stroke-width: 2.400; }
.dash { fill: none; stroke: #333; stroke-width: 1.200; stroke-dasharray: 4 2.500; }
.top { fill: none; stroke: #333; stroke-width: 3; }
.frame { fill: none; stroke: #444; stroke-width: 1.600; }
.kink { fill: none; stroke: #222; stroke-width: 1.600; }
.red { fill: #ee1c25; }
.redl { fill: none; stroke: #e8202a; stroke-width: 2.200; }
.vt { writing-mode: vertical-rl; font-size: 18px; letter-spacing: 2px; fill: #444; }
.cn { font-size: 15px; fill: #555; }
.cn-s { font-size: 11px; fill: #666; }
.it { font: italic 16px "Liberation Serif", serif; fill: #444; }
.it.big { font-size: 18px; }
.sr { font: 15px "Liberation Serif", serif; fill: #444; }
.sub { font-size: 10px; }
.ital { font-style: italic; font-family: "Liberation Serif", serif; }
.fig { font-size: 20px; fill: #444; }
.fign { fill: none; stroke: #444; stroke-width: 1.500; }
.notes text { font-size: 13px; fill: #444; }

.hbar { position: absolute; left: 0; top: 616px; width: 1085px; height: 10px; background: #555; display: flex; }
.hthumb { margin-left: 133px; width: 952px; height: 10px; background: #9a9a9a; border-radius: 5px; }
.vthumb { position: absolute; left: 1086px; top: 334px; width: 9px; height: 20px; background: #b0b0b0; border-radius: 4.500px; }

.status { height: 26px; background: #3a3a3a; border-bottom: 1px solid #555; display: grid; grid-template-columns: 640px 240px 1fr; align-items: center; flex: none; }
.st-left { padding-left: 2px; white-space: pre; color: #ccc; display: flex; align-items: center; line-height: 16px; }
.caret { width: 1px; height: 16px; background: #eee; margin-left: 1px; display: block; }
.pager { display: flex; align-items: center; }
.pg-arrow { width: 8px; height: 12px; fill: none; stroke: #ddd; stroke-width: 1.300; margin-left: 3px; flex: none; }
.pg-box { width: 39px; height: 15px; background: #fff; color: #222; text-align: center; border-radius: 3px; margin-left: 7px; margin-right: 7px; font: 12px/15px "Liberation Sans", sans-serif; }
.pg-total { width: 35px; color: #ccc; }
.st-right { display: flex; align-items: center; padding-left: 342px; }
.views { width: 52px; height: 24px; border-left: 1px solid #bbb; border-right: 1px solid #bbb; display: flex; justify-content: center; }
.view { width: 23px; height: 24px; display: block; }
.view.on { background: #5c5c5c; }
.vw { width: 23px; height: 24px; display: block; fill: none; stroke: #777; stroke-width: 1; }
.vw.on { stroke: #bbb; }
.zoom-btn { font: 15px "Liberation Sans", sans-serif; color: #ccc; width: 16px; text-align: center; margin-left: 8px; }
.zoom-val { width: 30px; margin-left: 8px; color: #bbb; text-align: center; }
.zoom-btn.plus { margin-left: 8px; font-size: 18px; }

.taskbar { height: 40px; flex: none; background: #0a1216; display: flex; color: #ddd; }
.start { width: 48px; background: #000; display: flex; align-items: center; justify-content: center; }
.win { width: 16px; height: 16px; fill: #fff; }
.search { width: 345px; background: #383838; display: flex; align-items: center; padding-left: 9px; flex: none; }
.cortana { width: 20px; height: 20px; fill: none; stroke: #ddd; stroke-width: 2.600; flex: none; }
.search-text { margin-left: 7px; font-size: 13px; color: #8a8a8a; white-space: nowrap; }
.mic { width: 13px; height: 18px; margin-left: 112px; fill: none; stroke: #7c7c7c; stroke-width: 1.400; flex: none; }
.apps { display: flex; width: 546px; flex: none; }
.app-i { width: 51px; height: 40px; display: flex; align-items: center; justify-content: center; border-bottom: 3px solid transparent; padding-top: 2px; flex: none; }
.app-i.first { width: 48px; }
.apps-gap { width: 3px; flex: none; }
.app-i.run { width: 41px; border-bottom-color: #76b6e6; margin-right: 8px; }
.app-i.active { width: 48px; background: #333b3f; margin: 0 0 0 -4px; }
.ai { width: 24px; height: 24px; display: block; }
.pdf-t { font: bold 8px "Liberation Sans", sans-serif; fill: #e8c8a0; text-anchor: middle; }
.tray { display: flex; align-items: center; flex: 1; color: #ddd; }
.t-link { width: 50px; margin-left: 21px; text-align: center; }
.t-cpu, .clock { display: flex; flex-direction: column; align-items: center; line-height: 17px; }
.t-cpu { width: 60px; font-size: 12px; }
.t-ic { width: 24px; display: flex; justify-content: center; }
.t-cpu + .t-ic { margin-left: 8px; }
.t-up { width: 14px; height: 10px; fill: none; stroke: #eee; stroke-width: 1.400; }
.t-bat { width: 18px; height: 15px; fill: none; stroke: #eee; stroke-width: 1.200; }
.t-kb { width: 36px; margin-left: 20px; display: flex; justify-content: center; }
.t-key { width: 24px; height: 16px; fill: none; stroke: #eee; stroke-width: 1; }
.t-zh { width: 22px; text-align: center; font-size: 13px; color: #eee; }
.t-s { width: 22px; margin-left: 7px; display: flex; justify-content: center; }
.t-so { width: 16px; height: 20px; }
.clock { width: 64px; margin-left: 14px; font-size: 13px; line-height: 19px; }
.notif { width: 44px; height: 40px; position: relative; display: flex; justify-content: center; padding-top: 9px; }
.n-ic { width: 18px; height: 18px; }
.n-badge { position: absolute; left: 24px; top: 17px; width: 17px; height: 17px; border-radius: 50%; background: #444; border: 1px solid #999; font: bold 11px/15px "Liberation Sans", sans-serif; text-align: center; color: #fff; }
```
